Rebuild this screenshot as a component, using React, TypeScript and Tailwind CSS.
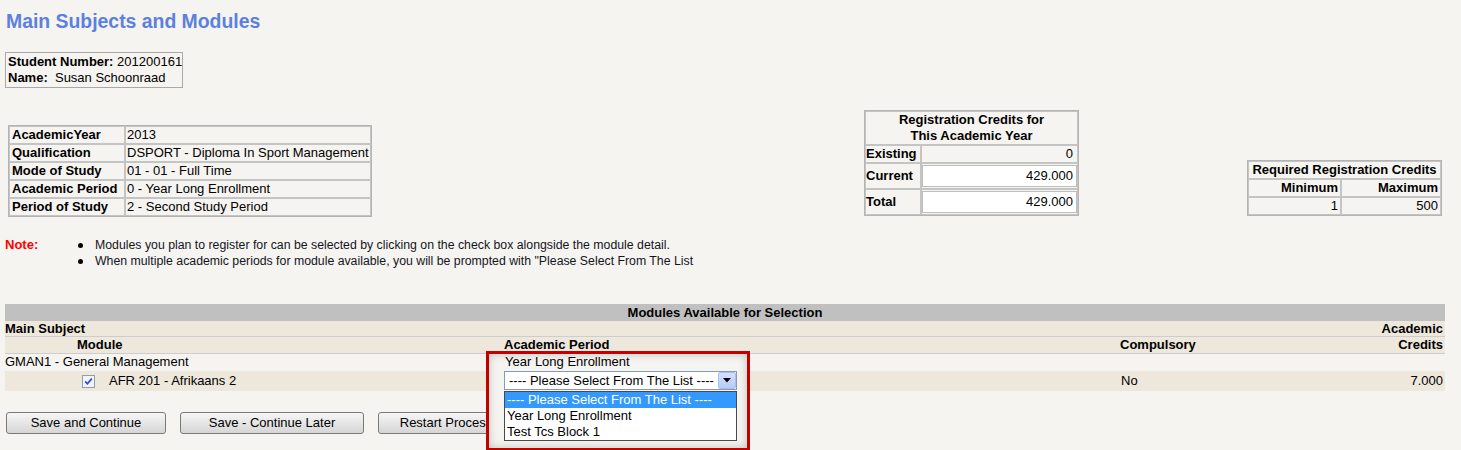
import React from "react";

const acad: [string, string][] = [
  ["AcademicYear", "2013"],
  ["Qualification", "DSPORT - Diploma In Sport Management"],
  ["Mode of Study", "01 - 01 - Full Time"],
  ["Academic Period", "0 - Year Long Enrollment"],
  ["Period of Study", "2 - Second Study Period"],
];

function CheckBox() {
  return (
    <svg width="13" height="13" viewBox="0 0 13 13">
      <rect x="0.5" y="0.5" width="12" height="12" fill="#f4f4f2" stroke="#8c9db8" />
      <path d="M3.2 6.4 L5.4 8.8 L9.8 3.6" stroke="#2d4fc8" strokeWidth="1.7" fill="none" />
    </svg>
  );
}

function Btn({ w, children }: { w: string; children: React.ReactNode }) {
  return (
    <button
      className={`${w} h-[22px] rounded-[3px] border border-[#7a7a7a] bg-linear-to-b from-[#f6f6f6] to-[#d6d6d6] text-[13px] leading-[16px] text-black whitespace-nowrap`}
    >
      {children}
    </button>
  );
}

export default function App() {
  const cell = "border border-[#c4c4c4]";
  return (
    <div className="relative w-[1461px] h-[450px] overflow-hidden bg-[#f6f4f0] font-['Liberation_Sans',Arial,sans-serif] text-[13px] leading-[16px] text-black">
      <h1 className="pt-[9px] pl-[6px] h-[33px] text-[19.4px] leading-[24px] font-bold text-[#5b80e0]">
        Main Subjects and Modules
      </h1>

      <div className="mt-[19px] ml-[5px] w-[178px] border border-[#a8a8a8] pl-[2px] py-[1px] whitespace-nowrap">
        <div>
          <b>Student Number:</b> 201200161
        </div>
        <div>
          <b>Name:</b>&nbsp; Susan Schoonraad
        </div>
      </div>

      <div className="mt-[22px] flex items-start whitespace-nowrap">
        <div className="mt-[15px] ml-[8px] w-[364px] border border-[#b4b4b4] grid grid-cols-[116px_246px]">
          {acad.map(([k, v]) => (
            <React.Fragment key={k}>
              <div className={`h-[18px] ${cell} pl-[2px] font-bold`}>{k}</div>
              <div className={`h-[18px] ${cell} pl-[1px]`}>{v}</div>
            </React.Fragment>
          ))}
        </div>

        <div className="ml-[492px] w-[215px] border border-[#b4b4b4] grid grid-cols-[56px_157px]">
          <div className={`col-span-2 h-[34px] ${cell} text-center font-bold`}>
            Registration Credits for
            <br />
            This Academic Year
          </div>
          <div className={`h-[18px] ${cell} font-bold`}>Existing</div>
          <div className={`h-[18px] ${cell} text-right pr-[4px]`}>0</div>
          <div className={`h-[26px] ${cell} flex items-center font-bold`}>Current</div>
          <div className={`h-[26px] ${cell} py-[1px]`}>
            <div className="h-full bg-white border border-[#bdbdbd] flex items-center justify-end pr-[3px]">
              429.000
            </div>
          </div>
          <div className={`h-[26px] ${cell} flex items-center font-bold`}>Total</div>
          <div className={`h-[26px] ${cell} py-[1px]`}>
            <div className="h-full bg-white border border-[#bdbdbd] flex items-center justify-end pr-[3px]">
              429.000
            </div>
          </div>
        </div>

        <div className="ml-[168px] mt-[50px] w-[195px] border border-[#b4b4b4] grid grid-cols-[93px_100px]">
          <div className={`col-span-2 h-[18px] ${cell} text-center font-bold`}>
            Required Registration Credits
          </div>
          <div className={`h-[18px] ${cell} text-right pr-[2px] font-bold`}>Minimum</div>
          <div className={`h-[18px] ${cell} text-right pr-[2px] font-bold`}>Maximum</div>
          <div className={`h-[18px] ${cell} text-right pr-[2px]`}>1</div>
          <div className={`h-[18px] ${cell} text-right pr-[2px]`}>500</div>
        </div>
      </div>

      <div className="mt-[20px] flex whitespace-nowrap">
        <div className="w-[78px] pl-[5px] font-bold text-[#ff0000] text-[13px]">Note:</div>
        <ul className="text-[12.3px] leading-[16px] text-[#14141e]">
          <li className="flex items-center">
            <span className="w-[5px] h-[5px] rounded-full bg-black mr-[12px]" />
            Modules you plan to register for can be selected by clicking on the check box alongside the module detail.
          </li>
          <li className="flex items-center">
            <span className="w-[5px] h-[5px] rounded-full bg-black mr-[12px]" />
            When multiple academic periods for module available, you will be prompted with "Please Select From The List
          </li>
        </ul>
      </div>

      <div className="mt-[35px] ml-[5px] w-[1440px] whitespace-nowrap">
        <div className="h-[17px] bg-[#c0c0c0] text-center font-bold leading-[17px]">
          Modules Available for Selection
        </div>
        <div className="grid grid-cols-[499px_616px_1fr_auto] h-[16px] leading-[15px] bg-[#ede7dc] border-b border-[#cdcdcd] font-bold">
          <div>Main Subject</div>
          <div />
          <div />
          <div className="text-right pr-[2px]">Academic</div>
        </div>
        <div className="grid grid-cols-[499px_616px_1fr_auto] h-[17px] bg-[#ede7dc] border-b border-[#cdcdcd] font-bold">
          <div className="pl-[72px]">Module</div>
          <div className="relative z-20">Academic Period</div>
          <div>Compulsory</div>
          <div className="text-right pr-[2px]">Credits</div>
        </div>
        <div className="grid grid-cols-[499px_616px_1fr_auto] h-[17px]">
          <div>GMAN1 - General Management</div>
          <div className="relative z-20 pl-[1px]">Year Long Enrollment</div>
          <div />
          <div />
        </div>
        <div className="grid grid-cols-[499px_616px_1fr_auto] h-[20px] bg-[#ede7dc] items-center">
          <div className="flex items-center pl-[77px]">
            <CheckBox />
            <span className="ml-[14px]">AFR 201 - Afrikaans 2</span>
          </div>
          <div className="relative z-20 self-start">
            <div className="w-[233px] h-[19px] bg-white border border-[#7f9db9] flex">
              <span className="flex-1 pl-[4px] leading-[17px]">---- Please Select From The List ----</span>
              <span className="w-[18px] h-[17px] bg-linear-to-b from-[#d4e1fd] to-[#b7cbf8] border border-[#a9bff0] rounded-[2px] flex items-center justify-center">
                <svg width="8" height="5" viewBox="0 0 8 5">
                  <path d="M0 0H8L4 4.6Z" fill="#000" />
                </svg>
              </span>
            </div>
          </div>
          <div className="pl-[1px]">No</div>
          <div className="text-right pr-[2px]">7.000</div>
        </div>
      </div>

      <div className="mt-[21px] ml-[6px] flex gap-[14px]">
        <Btn w="w-[160px]">Save and Continue</Btn>
        <Btn w="w-[184px]">Save - Continue Later</Btn>
        <Btn w="w-[136px]">Restart Process</Btn>
      </div>

      <div className="absolute left-[486px] top-[351px] w-[264px] h-[100px] z-10 border-[3px] border-[#c20000] bg-[#f6f4f0] shadow-[inset_0_0_8px_rgba(0,0,0,0.22)]" />

      <div className="absolute left-[504px] top-[391px] w-[233px] h-[50px] z-30 border border-[#4a4a4a] bg-white text-[13px] leading-[16px] whitespace-nowrap">
        <div className="h-[16px] bg-[#3399ff] text-white pl-[2px]">---- Please Select From The List ----</div>
        <div className="h-[16px] pl-[2px]">Year Long Enrollment</div>
        <div className="h-[16px] pl-[2px]">Test Tcs Block 1</div>
      </div>
    </div>
  );
}
